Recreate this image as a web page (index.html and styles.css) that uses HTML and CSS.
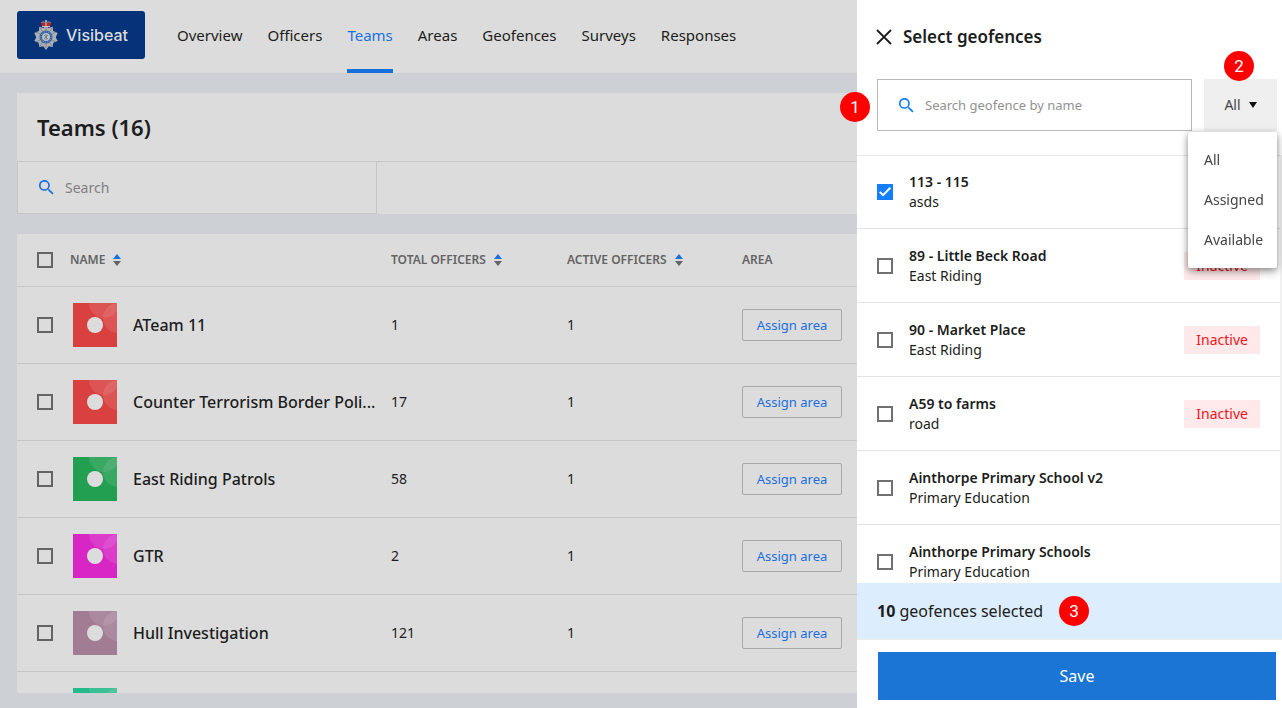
FILE: index.html
```html
<!DOCTYPE html>
<html lang="en">
<head>
<meta charset="utf-8">
<meta name="viewport" content="width=device-width, initial-scale=1">
<title>Visibeat – Teams</title>
<link rel="stylesheet" href="styles.css">
</head>
<body>
<svg class="defs" aria-hidden="true">
  <symbol id="search" viewBox="0 0 18 18"><path d="M12.500 11h-.8l-.3-.3A6.500 6.500 0 1 0 10.700 11.400l.3.3v.8l5 5 1.500-1.500zm-6 0a4.500 4.500 0 1 1 0-9 4.500 4.500 0 0 1 0 9z" fill="currentColor"/></symbol>
  <symbol id="sort" viewBox="0 0 8 12"><path d="M4 0l4 5H0z" fill="#1a6fe0"/><path d="M0 7h8l-4 5z" fill="#646464"/></symbol>
  <symbol id="avatar" viewBox="0 0 44 44"><path d="M0 0h44v44H0z" fill="currentColor"/><circle cx="31" cy="0" r="15" fill="#fff" opacity=".1"/><circle cx="45" cy="15" r="15" fill="#fff" opacity=".1"/><circle cx="22" cy="22" r="8" fill="#dcdcdc"/></symbol>
</svg>

<div class="app">
  <header class="topbar">
    <a class="brand" href="#">
      <svg class="crest" viewBox="0 0 24 30" aria-hidden="true">
        <path d="M12 5l2.400 3 4.300-1.200.4 4.200 4.600 2-2 4.300 2 3.700-4.400 1.700-.6 4.300-4-.7L12 30l-2.700-3.700-4 .7-.6-4.300L.3 21l2-3.700-2-4.300 4.600-2 .4-4.200L9.600 8z" fill="#aeb0b4"/>
        <path d="M12 7v21M2 12l20 10M2 22l20-10M6 8l12 18M18 8L6 26" stroke="#777c84" stroke-width=".8"/>
        <circle cx="12" cy="17" r="6.500" fill="#2c5fa8"/>
        <circle cx="12" cy="17" r="5.200" fill="none" stroke="#a3b0c6" stroke-width=".8" stroke-dasharray="1 1"/>
        <circle cx="12" cy="17" r="4" fill="#bcbfc4"/>
        <path d="M10 15l4 4M14 15l-4 4M12 14v6" stroke="#6f7889" stroke-width=".9"/>
        <path d="M7 3c2-2 3.500-1 5 .5C13.500 2 15 1 17 3l-1 4H8z" fill="#b5282e"/>
        <path d="M8 6.500h8M12 0v6M10.800 1h2.400" fill="none" stroke="#c9c6c0" stroke-width="1"/>
        <path d="M7 3c2-2 3.500-1 5 .5C13.500 2 15 1 17 3" fill="none" stroke="#a8a5a2" stroke-width=".8"/>
      </svg>
      <span>Visibeat</span>
    </a>
    <nav class="nav">
      <a href="#">Overview</a>
      <a href="#">Officers</a>
      <a href="#" class="active" aria-current="page">Teams</a>
      <a href="#">Areas</a>
      <a href="#">Geofences</a>
      <a href="#">Surveys</a>
      <a href="#">Responses</a>
    </nav>
  </header>

  <main class="main">
    <section class="card">
      <h1 class="title">Teams (16)</h1>
      <label class="team-search">
        <svg class="icon"><use href="#search"/></svg>
        <input type="text" placeholder="Search" aria-label="Search teams">
      </label>
    </section>

    <section class="card list-card">
      <table class="teams">
        <colgroup><col class="c-check"><col class="c-name"><col class="c-total"><col class="c-active"><col></colgroup>
        <thead>
          <tr>
            <th><input class="box" type="checkbox" aria-label="Select all teams"></th>
            <th><button class="sort">NAME <svg><use href="#sort"/></svg></button></th>
            <th><button class="sort">TOTAL OFFICERS <svg><use href="#sort"/></svg></button></th>
            <th><button class="sort">ACTIVE OFFICERS <svg><use href="#sort"/></svg></button></th>
            <th>AREA</th>
          </tr>
        </thead>
        <tbody>
          <tr><td><input class="box" type="checkbox" aria-label="ATeam 11"></td><td><div class="team"><svg class="avatar red"><use href="#avatar"/></svg><span>ATeam 11</span></div></td><td>1</td><td>1</td><td><button class="assign">Assign area</button></td></tr>
          <tr><td><input class="box" type="checkbox" aria-label="Counter Terrorism Border Poli..."></td><td><div class="team"><svg class="avatar red"><use href="#avatar"/></svg><span>Counter Terrorism Border Poli...</span></div></td><td>17</td><td>1</td><td><button class="assign">Assign area</button></td></tr>
          <tr><td><input class="box" type="checkbox" aria-label="East Riding Patrols"></td><td><div class="team"><svg class="avatar green"><use href="#avatar"/></svg><span>East Riding Patrols</span></div></td><td>58</td><td>1</td><td><button class="assign">Assign area</button></td></tr>
          <tr><td><input class="box" type="checkbox" aria-label="GTR"></td><td><div class="team"><svg class="avatar pink"><use href="#avatar"/></svg><span>GTR</span></div></td><td>2</td><td>1</td><td><button class="assign">Assign area</button></td></tr>
          <tr><td><input class="box" type="checkbox" aria-label="Hull Investigation"></td><td><div class="team"><svg class="avatar mauve"><use href="#avatar"/></svg><span>Hull Investigation</span></div></td><td>121</td><td>1</td><td><button class="assign">Assign area</button></td></tr>
          <tr><td></td><td><div class="team"><svg class="avatar teal"><use href="#avatar"/></svg></div></td><td></td><td></td><td></td></tr>
        </tbody>
      </table>
    </section>
  </main>
</div>

<aside class="drawer" aria-label="Select geofences">
  <header class="drawer-head">
    <button class="close" aria-label="Close"><svg viewBox="0 0 16 16"><path d="M1 1l14 14M15 1L1 15" stroke="currentColor" stroke-width="1.800" fill="none"/></svg></button>
    <h2>Select geofences</h2>
  </header>

  <div class="filters">
    <label class="geo-search">
      <svg class="icon"><use href="#search"/></svg>
      <input type="text" placeholder="Search geofence by name" aria-label="Search geofence by name">
      <span class="marker marker-search">1</span>
    </label>
    <div class="filter">
      <button class="filter-button" aria-haspopup="listbox" aria-expanded="true">All <svg viewBox="0 0 8 6"><path d="M0 0h8L4 6z" fill="currentColor"/></svg></button>
      <span class="marker marker-filter">2</span>
      <div class="menu" role="listbox">
        <button role="option">All</button>
        <button role="option">Assigned</button>
        <button role="option">Available</button>
      </div>
    </div>
  </div>

  <div class="geofences">
    <label class="geo"><input class="box" type="checkbox" checked><span class="geo-text"><b>113 - 115</b><span>asds</span></span></label>
    <label class="geo"><input class="box" type="checkbox"><span class="geo-text"><b>89 - Little Beck Road</b><span>East Riding</span></span><span class="tag">Inactive</span></label>
    <label class="geo"><input class="box" type="checkbox"><span class="geo-text"><b>90 - Market Place</b><span>East Riding</span></span><span class="tag">Inactive</span></label>
    <label class="geo"><input class="box" type="checkbox"><span class="geo-text"><b>A59 to farms</b><span>road</span></span><span class="tag">Inactive</span></label>
    <label class="geo"><input class="box" type="checkbox"><span class="geo-text"><b>Ainthorpe Primary School v2</b><span>Primary Education</span></span></label>
    <label class="geo"><input class="box" type="checkbox"><span class="geo-text"><b>Ainthorpe Primary Schools</b><span>Primary Education</span></span></label>
  </div>

  <div class="summary"><span><b>10</b> geofences selected</span><span class="marker">3</span></div>
  <footer class="drawer-foot"><button class="save">Save</button></footer>
</aside>
</body>
</html>
```

FILE: styles.css
```css
:root {
  --surface: #dcdcdc;
  --line: #c6c6c8;
  --link: #1b6fe0;
  --blue: #147eff;
  --ink: #1c1d20;
}

* { box-sizing: border-box; }

body {
  margin: 0;
  height: 100vh;
  overflow: hidden;
  background: #cdd1d6;
  color: var(--ink);
  font-family: "Noto Sans", "Open Sans", sans-serif;
  font-size: 14px;
  line-height: 20px;
}

button, input { font: inherit; color: inherit; }
button { background: none; border: 0; padding: 0; cursor: pointer; }
.defs { position: absolute; width: 0; height: 0; }

.app { height: 100%; display: flex; flex-direction: column; }

/* Top bar */
.topbar {
  flex: none;
  height: 73px;
  display: flex;
  align-items: center;
  gap: 32px;
  padding: 0 17px;
  background: var(--surface);
}
.brand {
  display: flex;
  align-items: center;
  justify-content: center;
  gap: 8px;
  width: 128px;
  height: 48px;
  margin-bottom: 4px;
  border-radius: 3px;
  background: #053278;
  color: #dcdcdc;
  font-family: Inter, sans-serif;
  font-size: 16px;
  font-weight: 500;
  text-decoration: none;
}
.crest { width: 24px; height: 30px; }
.nav { display: flex; gap: 25px; align-self: stretch; }
.nav a {
  display: flex;
  align-items: center;
  border-bottom: 4px solid transparent;
  color: var(--ink);
  font-size: 15px;
  text-decoration: none;
}
.nav a.active { color: var(--link); border-color: #1670dc; }

/* Teams */
.main {
  flex: 1;
  min-height: 0;
  display: flex;
  flex-direction: column;
  gap: 20px;
  padding: 20px 17px 15px;
}
.card { background: var(--surface); }
.title {
  margin: 0;
  padding: 20px;
  border-bottom: 1px solid var(--line);
  font-size: 22px;
  font-weight: 600;
  line-height: 28px;
}
.team-search {
  display: flex;
  align-items: center;
  gap: 11px;
  width: 360px;
  height: 52px;
  padding: 0 21px;
  border: 1px solid var(--line);
  border-top: 0;
}
.icon { flex: none; width: 15px; height: 15px; color: var(--blue); }
.team-search .icon { color: var(--link); }
.team-search input, .geo-search input {
  flex: 1;
  min-width: 0;
  padding: 0;
  border: 0;
  outline: 0;
  background: none;
}
::placeholder { color: #929292; opacity: 1; }
.team-search ::placeholder { color: #808080; }

.list-card { flex: 1; min-height: 0; overflow: hidden; }
.teams { width: 100%; border-collapse: collapse; table-layout: fixed; }
.c-check { width: 53px; }
.c-name { width: 321px; }
.c-total { width: 176px; }
.c-active { width: 175px; }
.teams th, .teams td { padding: 0; border-bottom: 1px solid var(--line); text-align: left; }
.teams th { height: 52px; color: #646464; font-size: 12px; font-weight: 600; }
.teams td { height: 77px; }
.teams th:first-child, .teams td:first-child { padding-left: 20px; }
.sort { display: flex; align-items: center; gap: 8px; }
.sort svg { width: 8px; height: 12px; }
.team { display: flex; align-items: center; gap: 16px; padding-left: 3px; font-size: 16px; font-weight: 500; white-space: nowrap; }
.avatar { flex: none; width: 44px; height: 44px; }
.red { color: #d94141; }
.green { color: #239f52; }
.pink { color: #d726c4; }
.mauve { color: #a27c93; }
.teal { color: #23b98a; }
.assign {
  width: 100px;
  height: 32px;
  border: 1px solid #a9a9a9;
  border-radius: 2px;
  color: var(--link);
  font-size: 13px;
}

.box {
  appearance: none;
  display: block;
  flex: none;
  width: 16px;
  height: 16px;
  margin: 0;
  border: 2px solid #646464;
}
.geo .box { border-color: #707070; }
.geo .box:checked { border-color: var(--blue); background: var(--blue); }
.box:checked::before {
  content: "";
  display: block;
  width: 12px;
  height: 12px;
  background: #fff;
  clip-path: polygon(0 55%, 12% 43%, 34% 65%, 88% 9%, 100% 21%, 34% 88%);
}

/* Drawer */
.drawer {
  position: fixed;
  top: 0;
  right: 0;
  bottom: 0;
  width: 425px;
  max-width: 100%;
  display: flex;
  flex-direction: column;
  background: #fff;
}
.drawer-head { display: flex; align-items: center; gap: 11px; padding: 25px 19px 30px; }
.drawer-head h2 { margin: 0; font-size: 17px; font-weight: 600; line-height: 24px; }
.close { width: 16px; height: 16px; }
.close svg { display: block; width: 16px; height: 16px; }
.filters { display: flex; gap: 12px; padding: 0 5px 24px 20px; }
.geo-search {
  position: relative;
  flex: 1;
  display: flex;
  align-items: center;
  gap: 11px;
  height: 52px;
  padding: 0 21px;
  border: 1px solid #b8b8b8;
  font-size: 13px;
}
.filter { position: relative; width: 73px; }
.filter-button {
  display: flex;
  align-items: center;
  justify-content: center;
  gap: 8px;
  width: 100%;
  height: 52px;
  background: #efefef;
  color: #444;
}
.filter-button svg { width: 8px; height: 6px; color: #111; }
.menu {
  position: absolute;
  z-index: 1;
  top: 53px;
  right: 0;
  width: 89px;
  padding: 8px 0;
  background: #fff;
  border-radius: 2px;
  box-shadow: 0 4px 8px rgba(0, 0, 0, .3), 0 1px 6px rgba(0, 0, 0, .25);
}
.menu button { display: block; width: 100%; padding: 10px 12px 10px 16px; color: #444; text-align: left; }

.geofences { flex: 1; min-height: 0; overflow: hidden; border-top: 1px solid #e8e8e8; border-right: 2px solid #f1f1f1; }
.geo {
  display: flex;
  align-items: center;
  gap: 16px;
  height: 74px;
  padding: 0 20px;
  border-bottom: 1px solid #e4e4e4;
}
.geo:first-child { height: 73px; }
.geo-text { flex: 1; }
.geo-text b, .geo-text span { display: block; }
.geo-text b { font-weight: 600; }
.tag { padding: 4px 12px; background: #ffe9ea; color: #f01420; }

.summary {
  display: flex;
  align-items: center;
  gap: 16px;
  height: 57px;
  padding: 0 20px;
  background: #dcedfe;
  border-bottom: 1px solid #ececec;
  font-size: 16px;
}
.drawer-foot { padding: 12px 6px 8px 21px; }
.save { display: block; width: 100%; height: 48px; background: #1a75d4; color: #fff; font-size: 16px; }

.marker {
  display: flex;
  align-items: center;
  justify-content: center;
  width: 30px;
  height: 30px;
  border-radius: 50%;
  background: #f00;
  color: #fff;
  font-family: Roboto, sans-serif;
  font-size: 17px;
}
.marker-search { position: absolute; top: 12px; left: -38px; }
.marker-filter { position: absolute; top: -28px; left: 20px; }
```
